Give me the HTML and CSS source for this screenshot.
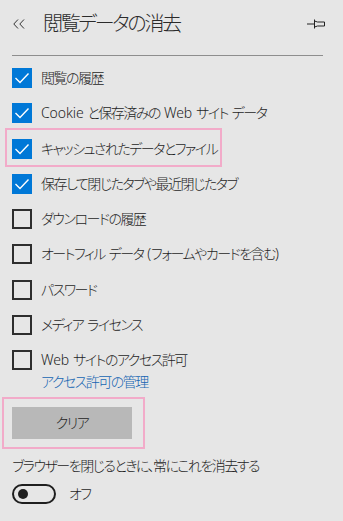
FILE: index.html
```html
<!DOCTYPE html>
<html lang="ja">
<head>
    <meta charset="UTF-8">
    <meta name="viewport" content="width=device-width, initial-scale=1.0">
    <title>閲覧データの消去</title>
    <link rel="stylesheet" href="styles.css">
</head>
<body>
    <div class="header">
        <svg class="back" width="13" height="10" viewBox="0 0 13 10">
            <polyline points="5,0.5 0.8,5 5,9.5" />
            <polyline points="11,0.5 6.8,5 11,9.5" />
        </svg>
        <h1>閲覧データの消去</h1>
        <svg class="pin" width="19" height="10" viewBox="0 0 19 10">
            <line x1="0" y1="5" x2="7" y2="5" />
            <line x1="7.5" y1="0.5" x2="7.5" y2="9.5" />
            <polyline points="7.5,2 10.5,3 17.5,3 17.5,7 10.5,7 7.5,8" />
        </svg>
    </div>
    <div class="divider"></div>

    <div class="list">
        <label class="row"><span class="box checked"></span>閲覧の履歴</label>
        <label class="row"><span class="box checked"></span><span><span class="en">Cookie</span> と保存済みの <span class="en">Web</span> サイト データ</span></label>
        <label class="row hl"><span class="box checked"></span>キャッシュされたデータとファイル</label>
        <label class="row"><span class="box checked"></span>保存して閉じたタブや最近閉じたタブ</label>
        <label class="row"><span class="box"></span>ダウンロードの履歴</label>
        <label class="row"><span class="box"></span><span>オートフィル データ <span class="en">(</span>フォームやカードを含む<span class="en">)</span></span></label>
        <label class="row"><span class="box"></span>パスワード</label>
        <label class="row"><span class="box"></span>メディア ライセンス</label>
        <label class="row"><span class="box"></span><span><span class="en">Web</span> サイトのアクセス許可</span></label>
    </div>
    <a class="manage" href="#">アクセス許可の管理</a>

    <div class="clear-wrap">
        <button class="clear">クリア</button>
    </div>

    <p class="always">ブラウザーを閉じるときに、常にこれを消去する</p>
    <div class="toggle-row">
        <span class="toggle"></span>
        <span>オフ</span>
    </div>
</body>
</html>
```

FILE: styles.css
```css
body {
    margin: 0;
    padding: 0 0 0 12px;
    background: #e6e6e6;
    color: #1f1f1f;
    font-family: "Noto Sans", "Noto Sans CJK JP", sans-serif;
    font-feature-settings: "palt";
    font-size: 14px;
    font-weight: 300;
    letter-spacing: -1.5px;
    word-spacing: 1.8px;
    line-height: 20px;
    overflow: hidden;
}

.en {
    letter-spacing: -0.1px;
}

.header {
    display: flex;
    align-items: center;
    height: 48px;
    padding-right: 17px;
}

.back {
    margin-left: 1px;
    fill: none;
    stroke: #333;
    stroke-width: 1;
}

h1 {
    flex: 1;
    margin: 0 0 0 17px;
    font-size: 20px;
    font-weight: 300;
    color: #2b2b2b;
    letter-spacing: -2.3px;
}

.pin {
    fill: none;
    stroke: #222;
    stroke-width: 1;
}

.divider {
    margin: 7px 20px 0 0;
    border-top: 1px solid #8e8e8e;
}

.list {
    display: flex;
    flex-direction: column;
    gap: 15.25px;
    margin-top: 12px;
}

.row {
    position: relative;
    display: flex;
    align-items: center;
    gap: 9px;
    width: fit-content;
    height: 20px;
    white-space: nowrap;
}

.box {
    box-sizing: border-box;
    width: 20px;
    height: 20px;
    flex: none;
    border: 2px solid #2e2e2e;
}

.box.checked {
    border: none;
    background: #0078d7 url("data:image/svg+xml,%3Csvg xmlns='http://www.w3.org/2000/svg' width='20' height='20'%3E%3Cpolyline points='3.5,10 8,14.5 16.5,5.5' fill='none' stroke='white' stroke-width='1.4'/%3E%3C/svg%3E") no-repeat;
}

.hl::before {
    content: "";
    position: absolute;
    top: -11px;
    bottom: -8px;
    left: -7px;
    right: -5px;
    border: 2px solid #f2abc9;
}

.manage {
    display: block;
    margin: 3px 0 0 29px;
    color: #1565b2;
    text-decoration: none;
    line-height: 18px;
}

.clear-wrap {
    position: relative;
    width: fit-content;
    margin-top: 16px;
}

.clear-wrap::before {
    content: "";
    position: absolute;
    top: -10px;
    bottom: -10px;
    left: -10px;
    right: -13px;
    border: 2px solid #f2abc9;
}

.clear {
    width: 120px;
    height: 32px;
    border: none;
    background: #b8b8b8;
    color: #1f1f1f;
    font: inherit;
    letter-spacing: inherit;
    display: block;
}

.always {
    margin: 17px 0 0;
}

.toggle-row {
    display: flex;
    align-items: center;
    gap: 13px;
    margin-top: 8px;
}

.toggle {
    position: relative;
    box-sizing: border-box;
    width: 44px;
    height: 20px;
    border: 2px solid #1f1f1f;
    border-radius: 10px;
}

.toggle::after {
    content: "";
    position: absolute;
    top: 3px;
    left: 4px;
    width: 10px;
    height: 10px;
    border-radius: 50%;
    background: #1f1f1f;
}
```
